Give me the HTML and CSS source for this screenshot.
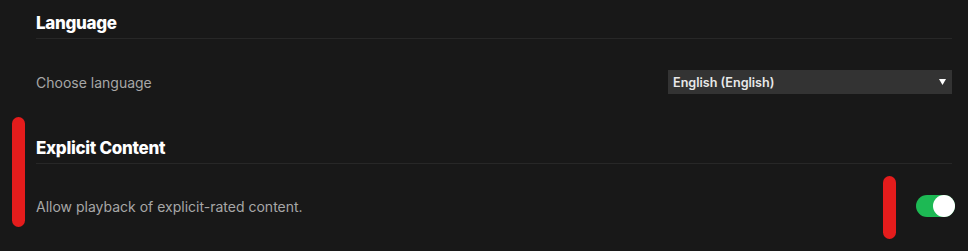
FILE: index.html
```html
<!DOCTYPE html>
<html lang="en">
<head>
<meta charset="utf-8">
<link rel="stylesheet" href="styles.css">
</head>
<body>
<div class="page">
  <section class="section">
    <h2 class="heading">Language</h2>
    <div class="row">
      <span class="label">Choose language</span>
      <div class="select">
        <span class="select-text">English (English)</span>
        <svg class="arrow" width="7" height="6" viewBox="0 0 7 6"><path d="M0 0 H7 L3.5 6 Z" fill="#fff"/></svg>
      </div>
    </div>
  </section>
  <section class="section">
    <h2 class="heading">Explicit Content</h2>
    <div class="row">
      <span class="label">Allow playback of explicit-rated content.</span>
      <div class="toggle"><span class="knob"></span></div>
    </div>
  </section>
  <span class="mark mark-left"></span>
  <span class="mark mark-right"></span>
</div>
</body>
</html>
```
FILE: styles.css
```css
html, body {
  margin: 0;
  padding: 0;
  background: #181818;
}
.page {
  position: relative;
  width: 968px;
  height: 251px;
  box-sizing: border-box;
  padding: 0 16px 0 36px;
  font-family: Inter, "Liberation Sans", Arial, sans-serif;
  overflow: hidden;
}
.heading {
  margin: 0;
  padding: 12px 0 4px;
  line-height: 22px;
  font-size: 17px;
  font-weight: 800;
  color: #ffffff;
  border-bottom: 1px solid #272727;
  letter-spacing: -0.3px;
}
.row {
  display: flex;
  align-items: center;
  justify-content: space-between;
  padding: 31px 0 31px;
  height: 24px;
}
.section + .section .row {
  height: 22px;
  padding-bottom: 0;
}
.label {
  font-size: 14px;
  color: #a7a7a7;
}
.select {
  width: 284px;
  height: 24px;
  box-sizing: border-box;
  background: #333333;
  display: flex;
  align-items: center;
  justify-content: space-between;
  padding: 0 6px 0 5px;
}
.select-text {
  font-size: 12.6px;
  font-weight: 600;
  color: #e8e8e8;
}
.arrow {
  display: block;
}
.toggle {
  width: 39px;
  height: 22px;
  border-radius: 11px;
  background: #1db954;
  position: relative;
  margin-right: -3px;
}
.knob {
  position: absolute;
  right: 0;
  top: 0;
  width: 22px;
  height: 22px;
  border-radius: 50%;
  background: #ffffff;
}
.mark {
  position: absolute;
  background: #e41c1c;
  border-radius: 7px;
}
.mark-left {
  left: 12px;
  top: 117px;
  width: 13px;
  height: 110px;
}
.mark-right {
  left: 883px;
  top: 176px;
  width: 13px;
  height: 63px;
}
```
